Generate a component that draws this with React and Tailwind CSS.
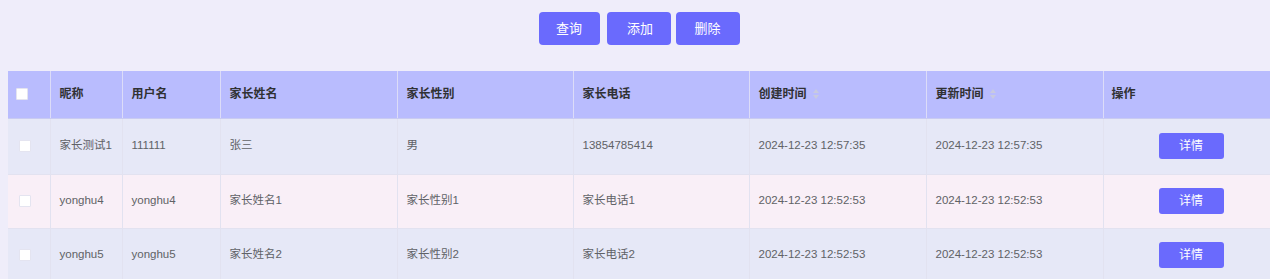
import React from 'react';

const columns = [
  { key: 'nickname', label: '昵称', w: 'w-[72px]' },
  { key: 'username', label: '用户名', w: 'w-[98px]' },
  { key: 'name', label: '家长姓名', w: 'w-[177px]' },
  { key: 'gender', label: '家长性别', w: 'w-[176px]' },
  { key: 'phone', label: '家长电话', w: 'w-[176px]' },
  { key: 'created', label: '创建时间', w: 'w-[177px]', sort: true },
  { key: 'updated', label: '更新时间', w: 'w-[177px]', sort: true },
];

const rows = [
  { nickname: '家长测试1', username: '111111', name: '张三', gender: '男', phone: '13854785414', created: '2024-12-23 12:57:35', updated: '2024-12-23 12:57:35' },
  { nickname: 'yonghu4', username: 'yonghu4', name: '家长姓名1', gender: '家长性别1', phone: '家长电话1', created: '2024-12-23 12:52:53', updated: '2024-12-23 12:52:53' },
  { nickname: 'yonghu5', username: 'yonghu5', name: '家长姓名2', gender: '家长性别2', phone: '家长电话2', created: '2024-12-23 12:52:53', updated: '2024-12-23 12:52:53' },
];

function SortCaret() {
  return (
    <span className="inline-flex flex-col ml-[6px] gap-[2px] align-middle">
      <svg width="6" height="4" viewBox="0 0 6 4"><path d="M3 0L6 4H0z" fill="#c8cae0" /></svg>
      <svg width="6" height="4" viewBox="0 0 6 4"><path d="M0 0H6L3 4z" fill="#c8cae0" /></svg>
    </span>
  );
}

function Box() {
  return <span className="block w-[12px] h-[12px] bg-white border border-[#e4e4f0] rounded-[1px]" />;
}

export default function App() {
  return (
    <div
      className="w-[1270px] h-[279px] bg-[#efedfa] overflow-hidden"
      style={{ fontFamily: '"Liberation Sans", "Noto Sans CJK SC", sans-serif' }}
    >
      {/* toolbar */}
      <div className="flex justify-center pt-[12px] h-[71px] pl-[8px]">
        <button className="w-[61px] h-[33px] rounded-[4px] bg-[#6a6afd] text-white text-[13px] mr-[7px]">查询</button>
        <button className="w-[64px] h-[33px] rounded-[4px] bg-[#6a6afd] text-white text-[13px] mr-[5px] pl-[3px]">添加</button>
        <button className="w-[64px] h-[33px] rounded-[4px] bg-[#6a6afd] text-white text-[13px]">删除</button>
      </div>

      <div className="pl-[8px]">
        <table className="table-fixed border-collapse w-[1262px] text-[11.5px]">
          <thead>
            <tr className="h-[47px] bg-[#b9bcfe] text-[#303133] text-[12px]">
              <th className="w-[42px] border-r border-[#dcdcf8] border-b border-b-[#c9cbf2] pl-[8px]">
                <Box />
              </th>
              {columns.map((c) => (
                <th
                  key={c.key}
                  className={`${c.w} text-left font-bold pl-[9px] border-r border-[#dcdcf8] border-b border-b-[#c9cbf2]`}
                >
                  <span className="inline-flex items-center">
                    {c.label}
                    {c.sort && <SortCaret />}
                  </span>
                </th>
              ))}
              <th className="text-left font-bold pl-[8px] border-b border-b-[#c9cbf2]">操作</th>
            </tr>
          </thead>
          <tbody className="text-[#606266]">
            {rows.map((r, i) => (
              <tr
                key={i}
                className={`${i === 0 ? 'h-[56px]' : 'h-[54px]'} ${i % 2 === 0 ? 'bg-[#e6e8f7]' : 'bg-[#f9eff7]'}`}
              >
                <td className="border-r border-b border-[#e2e2f0] pl-[11px]">
                  <Box />
                </td>
                {columns.map((c) => (
                  <td key={c.key} className="border-r border-b border-[#e2e2f0] pl-[9px] whitespace-nowrap">
                    {r[c.key]}
                  </td>
                ))}
                <td className="border-b border-[#e2e2f0] pl-[55px]">
                  <button className="w-[65px] h-[26px] rounded-[3px] bg-[#6a6afd] text-white text-[12px]">详情</button>
                </td>
              </tr>
            ))}
          </tbody>
        </table>
      </div>
    </div>
  );
}
